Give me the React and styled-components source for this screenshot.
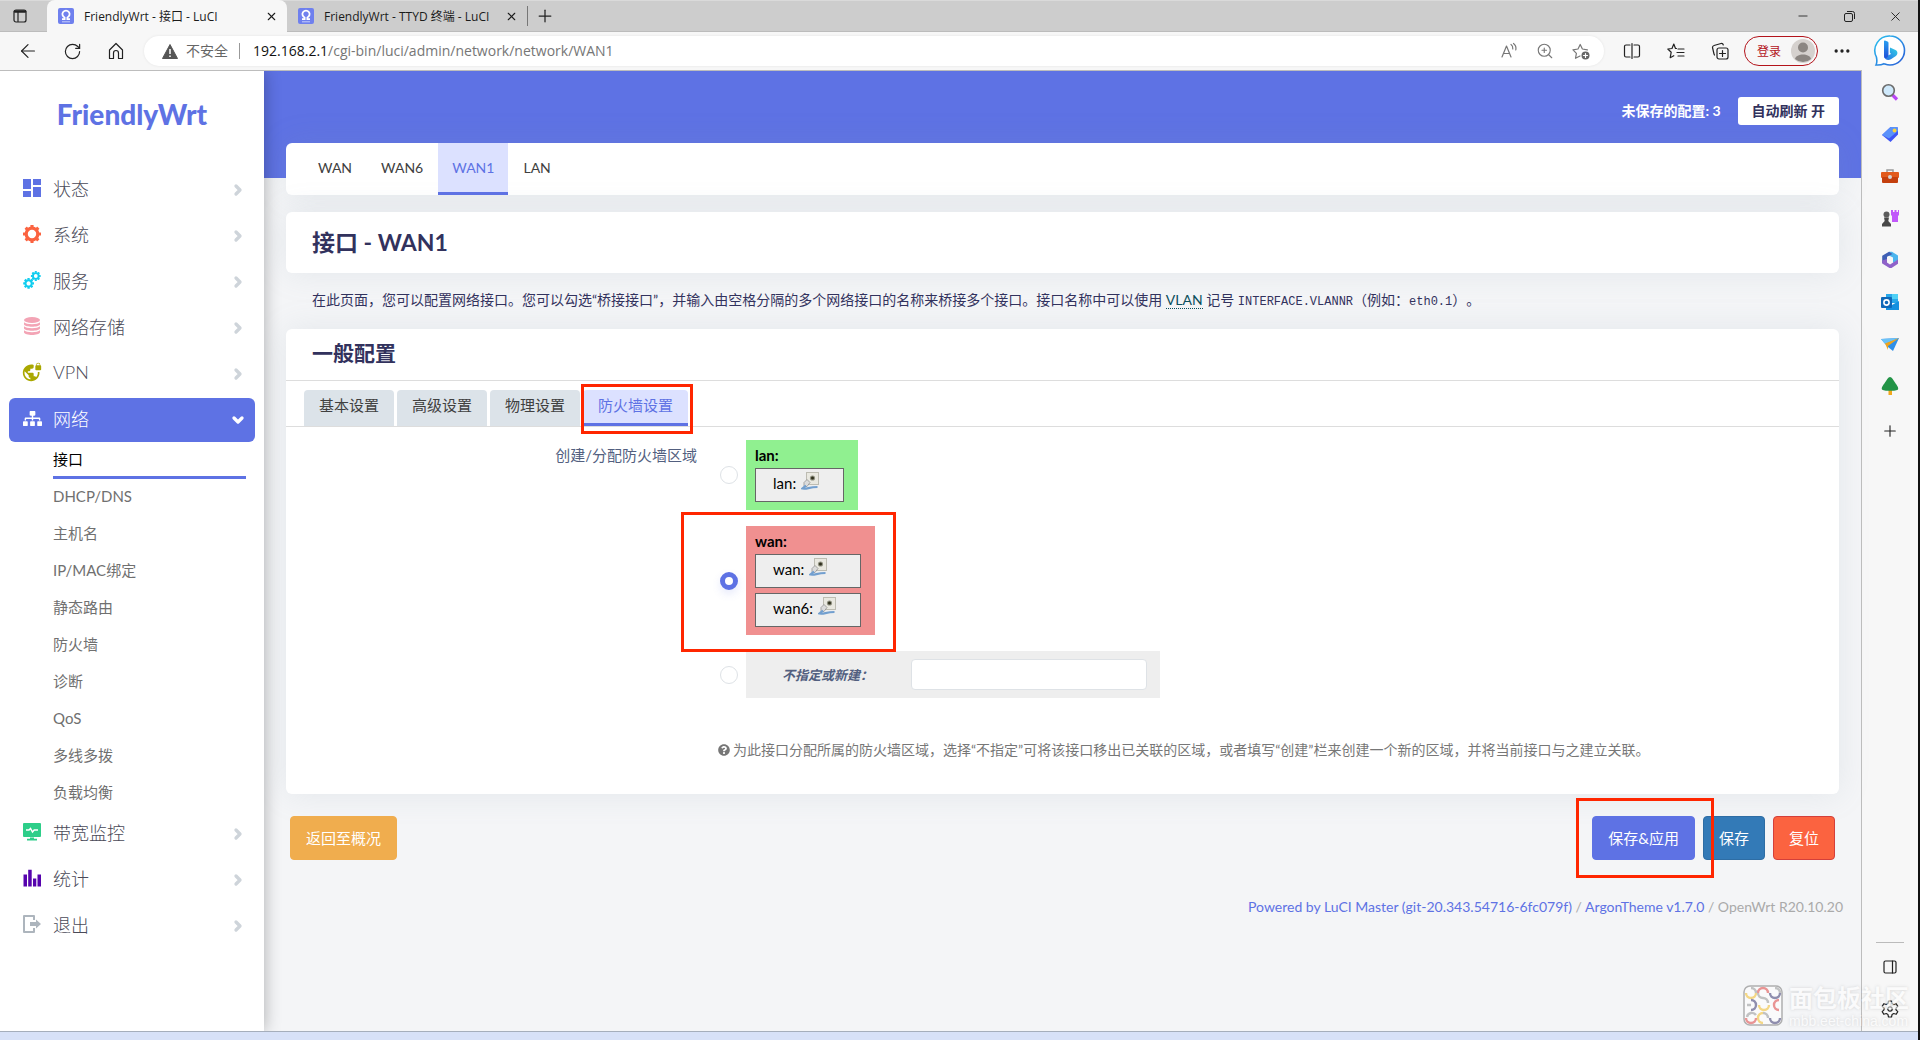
import React, { useState } from "react";
import styled, { createGlobalStyle, css } from "styled-components";
import { MdDashboard, MdVpnLock } from "react-icons/md";
import { FaQuestionCircle, FaSitemap } from "react-icons/fa";
import {
  ArrowLeft,
  ChevronDown,
  ChevronRight,
  Ellipsis,
  Minus,
  Plus,
  RotateCw,
  X,
  ZoomIn,
} from "lucide-react";

const GlobalStyle = createGlobalStyle`
  * {
    box-sizing: border-box;
  }
  body {
    margin: 0;
    font-family: Lato, "Noto Sans CJK SC", sans-serif;
    font-size: 15px;
    color: #32325d;
    background: #f4f5f7;
    text-spacing-trim: space-all;
  }
  button, input {
    font: inherit;
  }
  a {
    color: inherit;
    text-decoration: none;
  }
  h1, h2, p, ul {
    margin: 0;
    padding: 0;
  }
  ul {
    list-style: none;
  }
  svg {
    display: block;
    flex: none;
  }
`;

const favicon = (
  <svg width="16" height="16" viewBox="0 0 16 16">
    <rect width="16" height="16" rx="2" fill="#6f80ee" />
    <path
      d="M4 11.200h2.600V9.500A3.600 3.600 0 1 1 9.400 9.500v1.700H12"
      fill="none"
      stroke="#fff"
      strokeWidth="1.800"
    />
    <path d="M4 13.800h8" stroke="#c7cefa" strokeWidth="1" />
  </svg>
);

const Gear = ({ cx, cy, r, hole, tooth }) => (
  <g transform={`translate(${cx} ${cy})`}>
    <circle
      r={(r + hole) / 2}
      fill="none"
      stroke="currentColor"
      strokeWidth={r - hole}
    />
    {[0, 45, 90, 135, 180, 225, 270, 315].map((angle) => (
      <rect
        key={angle}
        x={-tooth}
        y={-r - tooth}
        width={tooth * 2}
        height={tooth * 1.5}
        rx="0.4"
        fill="currentColor"
        transform={`rotate(${angle})`}
      />
    ))}
  </g>
);

const systemIcon = (
  <svg width="18" height="18" viewBox="0 0 18 18">
    <Gear cx={9} cy={9} r={7.4} hole={4.2} tooth={1.6} />
  </svg>
);

const servicesIcon = (
  <svg width="18" height="18" viewBox="0 0 18 18">
    <Gear cx={5.6} cy={12.4} r={4.2} hole={2.1} tooth={1.2} />
    <Gear cx={12.8} cy={5} r={3.8} hole={1.9} tooth={1.1} />
  </svg>
);

const storageIcon = (
  <svg width="18" height="18" viewBox="0 0 18 18" fill="currentColor">
    <ellipse cx="9" cy="3" rx="8" ry="3" />
    <path d="M1 5.200c2 2.600 14 2.600 16 0v2.300c-1 3-15 3-16 0z" />
    <path d="M1 9.200c2 2.600 14 2.600 16 0v2.300c-1 3-15 3-16 0z" />
    <path d="M1 13.200c2 2.600 14 2.600 16 0v2.300c-1 3.300-15 3.300-16 0z" />
  </svg>
);

const monitorIcon = (
  <svg width="18" height="18" viewBox="0 0 18 18">
    <rect y="0" width="18" height="14" rx="1" fill="currentColor" />
    <path d="M4 16.700h10M7 15.500h4" stroke="currentColor" strokeWidth="1.800" />
    <path
      d="M3 7h3l1.500-1.500L9.500 9l1.700-2H15"
      fill="none"
      stroke="#fff"
      strokeWidth="1.500"
    />
  </svg>
);

const statsIcon = (
  <svg width="18" height="18" viewBox="0 0 18 18" fill="currentColor">
    <path d="M.5 5.500h3.500v12H.5zM5.200.8h3.500v16.700H5.200zM10 9.500h3.300v8H10zM14.500 5.500H18v12h-3.500z" />
  </svg>
);

const logoutIcon = (
  <svg width="18" height="18" viewBox="0 0 18 18">
    <path
      d="M11 5V1H1v16h10v-4"
      fill="none"
      stroke="currentColor"
      strokeWidth="2"
      strokeLinejoin="round"
    />
    <path d="M7 7h6V4.500L18 9l-5 4.500V11H7z" fill="currentColor" />
  </svg>
);

const menu = [
  { label: "状态", color: "#5e72e4", icon: <MdDashboard size={24} /> },
  { label: "系统", color: "#fb6340", icon: systemIcon },
  { label: "服务", color: "#11cdef", icon: servicesIcon },
  { label: "网络存储", color: "#f3a4b5", icon: storageIcon },
  { label: "VPN", color: "#aaa800", icon: <MdVpnLock size={20} /> },
  { label: "网络", color: "#ffffff", icon: <FaSitemap size={19} />, open: true },
  { label: "带宽监控", color: "#2dce89", icon: monitorIcon },
  { label: "统计", color: "#5603ad", icon: statsIcon },
  { label: "退出", color: "#adb5bd", icon: logoutIcon },
];

const networkPages = [
  "接口",
  "DHCP/DNS",
  "主机名",
  "IP/MAC绑定",
  "静态路由",
  "防火墙",
  "诊断",
  "QoS",
  "多线多拨",
  "负载均衡",
];

const interfaces = ["WAN", "WAN6", "WAN1", "LAN"];
const configTabs = ["基本设置", "高级设置", "物理设置", "防火墙设置"];

const zones = [
  { name: "lan", color: "#90f090", members: ["lan"] },
  { name: "wan", color: "#f09090", members: ["wan", "wan6"] },
];

const NetIcon = () => (
  <svg width="18" height="18" viewBox="0 0 18 18">
    <rect x="5.500" y=".5" width="12" height="12" fill="#e9e8e0" stroke="#bdbcb2" />
    <circle cx="11.500" cy="6" r="2.600" fill="#8f9080" />
    <circle cx="11.500" cy="6" r="1.500" fill="#2f2f1c" />
    <path d="M3 10.500l3-3 3 3-3 4H3z" fill="#dcdcdc" stroke="#888" strokeWidth=".7" />
    <path
      d="M5 13.500l-3.500 3c5 .8 6-1.500 15-1.500"
      fill="none"
      stroke="#729fcf"
      strokeWidth="2.200"
    />
  </svg>
);

const BingIcon = () => (
  <svg width="34" height="34" viewBox="0 0 34 34">
    <defs>
      <linearGradient id="bingRing" x1="0" y1="0" x2="1" y2="1">
        <stop offset="0" stopColor="#2bc4f0" />
        <stop offset="1" stopColor="#2a5bd7" />
      </linearGradient>
      <linearGradient id="bingMark" x1="0" y1="0" x2="0" y2="1">
        <stop offset="0" stopColor="#2aa0f0" />
        <stop offset="1" stopColor="#1f4fd8" />
      </linearGradient>
      <linearGradient id="bingTail" x1="0" y1="1" x2="1" y2="0">
        <stop offset="0" stopColor="#2a6be4" />
        <stop offset="1" stopColor="#31d3e6" />
      </linearGradient>
    </defs>
    <path
      d="M17 2a14.500 14.500 0 1 1 0 29c-3 0-4.500-.8-6-1.300-2 1-5 1.500-8 1.300 1.500-3 1-5 .4-8A14.500 14.500 0 0 1 17 2z"
      fill="#fff"
      stroke="url(#bingRing)"
      strokeWidth="1.600"
    />
    <path
      d="M17 13.500l5.500 2.500c2.500 1.200 2.500 4.500.4 5.900l-5 3.300c-2.600 1.600-5.900.4-6.700-2l6.800-3.200-1.200-1.500z"
      fill="url(#bingTail)"
    />
    <path d="M11 7.200c0-.6.500-.9 1-.7l2.500 1c.7.300 1 .7 1 1.400v11.600c0 1.500-.8 2.500-2 3.300-1.300.8-2.500-.1-2.500-1.500z" fill="url(#bingMark)" />
  </svg>
);

const railIcons = [
  {
    label: "搜索",
    art: (
      <>
        <path d="M11.500 12l4.500 4.500" stroke="#b847f5" strokeWidth="3.200" />
        <circle cx="7.500" cy="7.500" r="5.800" fill="#cfe9fb" stroke="#6b6b6b" strokeWidth="1.600" />
      </>
    ),
  },
  {
    label: "购物",
    art: (
      <>
        <path d="M9.500 2H16l1 1v6.500L9.500 17 1 10z" fill="#3f55f5" />
        <path d="M9.500 2H16l1 1v3L8 13.500 1 10z" fill="#5a92fa" />
        <circle cx="13.500" cy="5.500" r="1.900" fill="#fbd13c" />
      </>
    ),
  },
  {
    label: "工具",
    art: (
      <>
        <path d="M6 6V3h6v3" fill="none" stroke="#9a9a9a" strokeWidth="1.500" />
        <rect x="0" y="5" width="18" height="6" rx="1" fill="#e25a1c" />
        <rect x="1" y="10" width="16" height="6" rx="1" fill="#c43f0e" />
        <circle cx="9" cy="10" r="2" fill="#d5d5d5" />
      </>
    ),
  },
  {
    label: "游戏",
    art: (
      <>
        <path d="M10 1h2v2h1.500V1h2v2H17V1h1v5l-1 1v6h-6V7l-1-1z" fill="#c158fa" />
        <circle cx="5.500" cy="5.500" r="3" fill="#5c5c5c" />
        <path d="M3 8.500h5L7.300 12l2.700 3v2.500H1V15l2.700-3z" fill="#484848" />
      </>
    ),
  },
  {
    label: "Microsoft 365",
    art: (
      <>
        <path d="M8 .8h3l6 3.700v4.500l-5 3V6.500L7 4z" fill="#4bb5ee" />
        <path d="M8 .8L1.200 4.800v7.400L6 9.500V5.800L11.500 3z" fill="#3f5fb4" />
        <path d="M1.200 9.500v3L8.500 17h2L17 12.800V8.500l-8 5-3-2V8z" fill="#8f62c9" />
        <circle cx="9" cy="9" r="2.900" fill="#f7f7f7" />
      </>
    ),
  },
  {
    label: "Outlook",
    art: (
      <>
        <rect x="5" y="1" width="12" height="9" fill="#28a8ea" />
        <rect x="11" y="1" width="6" height="5" fill="#50d0f5" />
        <path d="M5 8l6 4 7-4v9H5z" fill="#1490df" />
        <rect x="0" y="4" width="11" height="11" rx="1" fill="#0f68b8" />
        <circle cx="5.500" cy="9.500" r="2.600" fill="none" stroke="#fff" strokeWidth="1.600" />
      </>
    ),
  },
  {
    label: "Drop",
    art: (
      <>
        <path d="M0 4l18-1-6 13-5-4z" fill="#2f8fe8" />
        <path d="M0 4l18-1L4 9z" fill="#6cc2f7" />
        <path d="M4 8.500l14-5.500L7 11v4z" fill="#f0a51e" />
      </>
    ),
  },
  {
    label: "植树",
    art: (
      <>
        <rect x="7.500" y="13" width="3.500" height="5" fill="#f2a81d" />
        <path d="M9 0c2 0 3 2.500 5 5.500 1.500 2.500 4 5 3 7-.8 1.800-15.200 1.800-16 0-1-2 1.500-4.500 3-7C6 2.500 7 0 9 0z" fill="#239447" />
      </>
    ),
  },
];

const ToolIcon = ({ children, color = "#222" }) => (
  <svg
    width="18"
    height="18"
    viewBox="0 0 18 18"
    fill="none"
    stroke={color}
    strokeWidth="1.200"
    strokeLinejoin="round"
    strokeLinecap="round"
  >
    {children}
  </svg>
);

const App = () => {
  const [zone, setZone] = useState("wan");
  const [newZone, setNewZone] = useState("");

  return (
    <Window>
      <GlobalStyle />
      <TabStrip>
        <TabActions aria-label="标签页操作">
          <ToolIcon>
            <rect x="3" y="3" width="12" height="12" rx="2" />
            <path d="M4 4.500h10" strokeWidth="2.500" />
            <path d="M7 5v9.500" />
          </ToolIcon>
        </TabActions>
        <BrowserTab $active>
          {favicon}
          <span>FriendlyWrt - 接口 - LuCI</span>
          <X size={13} strokeWidth={2} />
        </BrowserTab>
        <BrowserTab>
          {favicon}
          <span>FriendlyWrt - TTYD 终端 - LuCI</span>
          <X size={13} strokeWidth={2} />
        </BrowserTab>
        <NewTab aria-label="新建标签页">
          <Plus size={20} strokeWidth={1.500} />
        </NewTab>
        <WindowButtons>
          <button aria-label="最小化">
            <Minus size={14} strokeWidth={1.500} />
          </button>
          <button aria-label="还原">
            <svg width="11" height="11" viewBox="0 0 11 11" fill="none" stroke="#222">
              <rect x=".5" y="2.500" width="8" height="8" rx="1.500" />
              <path d="M3 .5h5.500a2 2 0 0 1 2 2V8" />
            </svg>
          </button>
          <button aria-label="关闭">
            <X size={15} strokeWidth={1.500} />
          </button>
        </WindowButtons>
      </TabStrip>

      <Body>
        <Column>
          <Toolbar>
            <IconButton aria-label="后退">
              <ArrowLeft size={22} strokeWidth={1.300} />
            </IconButton>
            <IconButton aria-label="刷新">
              <RotateCw size={19} strokeWidth={1.500} />
            </IconButton>
            <IconButton aria-label="主页">
              <ToolIcon>
                <path d="M2.500 8L9 1.500 15.500 8v8.500h-4V11a2.500 2.500 0 0 0-5 0v5.500h-4z" />
              </ToolIcon>
            </IconButton>
            <AddressBar>
              <svg width="16" height="15" viewBox="0 0 16 15">
                <path d="M8 .5L15.500 14.500H.5z" fill="#555" stroke="#555" strokeLinejoin="round" />
                <path d="M8 5v5M8 11.500v1.500" stroke="#fff" strokeWidth="1.500" />
              </svg>
              <Insecure>不安全</Insecure>
              <Url>
                <b>192.168.2.1</b>/cgi-bin/luci/admin/network/network/WAN1
              </Url>
              <AddressIcons>
                <ToolIcon color="#777">
                  <path d="M2 15L6.500 4 11 15M3.500 11.500h6M11 2.500c1.500 1 2 2.500 1.800 4.500M13.500 1.500c2 1.500 2.800 4 2.300 6.500" />
                </ToolIcon>
                <ZoomIn size={18} strokeWidth={1.500} />
                <ToolIcon color="#777">
                  <path d="M8 14l-4.500 2.300.9-5L1 7.800l5-.8 2.200-4.500L10.400 7l5 .8" />
                  <circle cx="13.500" cy="13.500" r="4" fill="#666" stroke="none" />
                  <path d="M13.500 11.500v4M11.500 13.500h4" stroke="#fff" />
                </ToolIcon>
              </AddressIcons>
            </AddressBar>
            <BrowserTools>
              <IconButton aria-label="分屏">
                <ToolIcon>
                  <path d="M7 3H3a1.500 1.500 0 0 0-1.500 1.500v9A1.500 1.500 0 0 0 3 15h4M11 3h4a1.500 1.500 0 0 1 1.500 1.500v9A1.500 1.500 0 0 1 15 15h-4M9 1.500v15" />
                </ToolIcon>
              </IconButton>
              <IconButton aria-label="收藏夹">
                <ToolIcon>
                  <path d="M9.500 6.500h-1L6.800 2 5 6.500l-4.200.5 3.400 3.200-1 5.500 3.600-2M11 7h6M10 10.500h7M11 14h6" />
                </ToolIcon>
              </IconButton>
              <IconButton aria-label="集锦">
                <ToolIcon>
                  <path d="M3 12L1.500 5.500a2 2 0 0 1 1.500-2l7-2a2 2 0 0 1 2.300 1.500M3 12l.5 1" />
                  <rect x="6" y="6" width="11" height="11" rx="2" />
                  <path d="M11.500 8.500v6M8.500 11.500h6" />
                </ToolIcon>
              </IconButton>
              <Login>
                登录
                <svg width="24" height="24" viewBox="0 0 24 24">
                  <circle cx="12" cy="12" r="12" fill="#d5d1ce" />
                  <circle cx="12" cy="8.500" r="5" fill="#8b8682" />
                  <path d="M4 20c1-6 15-6 16 0a12 12 0 0 1-16 0z" fill="#8b8682" />
                </svg>
              </Login>
              <MoreButton aria-label="更多">
                <Ellipsis size={20} strokeWidth={2} />
              </MoreButton>
            </BrowserTools>
          </Toolbar>

          <Page>
            <Sidebar>
              <Brand href="#">FriendlyWrt</Brand>
              <nav>
                {menu.map((item) => (
                  <React.Fragment key={item.label}>
                    <MenuLink href="#" $open={item.open}>
                      <MenuIcon $color={item.color}>{item.icon}</MenuIcon>
                      <span>{item.label}</span>
                      {item.open ? (
                        <ChevronDown size={16} strokeWidth={5} />
                      ) : (
                        <ChevronRight size={16} strokeWidth={5} />
                      )}
                    </MenuLink>
                    {item.open && (
                      <SubMenu>
                        {networkPages.map((page, i) => (
                          <SubItem key={page} $active={i === 0}>
                            <a href="#">{page}</a>
                          </SubItem>
                        ))}
                      </SubMenu>
                    )}
                  </React.Fragment>
                ))}
              </nav>
            </Sidebar>

            <Main>
              <Header>
                <a href="#">未保存的配置: 3</a>
                <RefreshButton>自动刷新 开</RefreshButton>
              </Header>
              <Content>
                <InterfaceTabs>
                  {interfaces.map((name) => (
                    <InterfaceTab key={name} href="#" $active={name === "WAN1"}>
                      {name}
                    </InterfaceTab>
                  ))}
                </InterfaceTabs>
                <TitleCard>
                  <h1>接口 - WAN1</h1>
                </TitleCard>
                <Description>
                  在此页面，您可以配置网络接口。您可以勾选“桥接接口”，并输入由空格分隔的多个网络接口的名称来桥接多个接口。接口名称中可以使用{" "}
                  <abbr>VLAN</abbr> 记号 <code>INTERFACE.VLANNR</code>（例如：
                  <code>eth0.1</code>）。
                </Description>

                <ConfigCard>
                  <h2>一般配置</h2>
                  <ConfigTabs>
                    {configTabs.map((tab) => (
                      <ConfigTab key={tab} $active={tab === "防火墙设置"}>
                        <a href="#">{tab}</a>
                      </ConfigTab>
                    ))}
                  </ConfigTabs>
                  <Field>
                    <FieldLabel>创建/分配防火墙区域</FieldLabel>
                    <div>
                      {zones.map(({ name, color, members }) => (
                        <ZoneRow key={name} $marked={name === "wan"}>
                          <Radio
                            id={`zone-${name}`}
                            name="zone"
                            checked={zone === name}
                            onChange={() => setZone(name)}
                          />
                          <Zone htmlFor={`zone-${name}`} $color={color}>
                            <strong>{name}:</strong>
                            {members.map((member) => (
                              <Member key={member}>
                                {member}: <NetIcon />
                              </Member>
                            ))}
                          </Zone>
                        </ZoneRow>
                      ))}
                      <ZoneRow>
                        <Radio
                          id="zone-new"
                          name="zone"
                          checked={zone === "new"}
                          onChange={() => setZone("new")}
                        />
                        <NewZone>
                          <label htmlFor="zone-new">不指定或新建：</label>
                          <input
                            aria-label="不指定或新建"
                            value={newZone}
                            onChange={(e) => setNewZone(e.target.value)}
                          />
                        </NewZone>
                      </ZoneRow>
                      <Hint>
                        <FaQuestionCircle size={12} />
                        <span>
                          为此接口分配所属的防火墙区域，选择“不指定”可将该接口移出已关联的区域，或者填写“创建”栏来创建一个新的区域，并将当前接口与之建立关联。
                        </span>
                      </Hint>
                    </div>
                  </Field>
                </ConfigCard>

                <Actions>
                  <Button $color="#f0ad4e">返回至概况</Button>
                  <ButtonGroup>
                    <Marked>
                      <Button $color="#5e72e4">保存&应用</Button>
                    </Marked>
                    <Button $color="#337ab7" $border="#2e6da4">
                      保存
                    </Button>
                    <Button $color="#fb6340" $border="#d43f3a">
                      复位
                    </Button>
                  </ButtonGroup>
                </Actions>
              </Content>
              <Footer>
                <a href="#">Powered by LuCI Master (git-20.343.54716-6fc079f)</a> /{" "}
                <a href="#">ArgonTheme v1.7.0</a> / OpenWrt R20.10.20
              </Footer>
            </Main>
          </Page>
        </Column>

        <EdgeBar>
          <BingButton aria-label="Bing">
            <BingIcon />
          </BingButton>
          <Rail>
            {railIcons.map(({ label, art }) => (
              <RailButton key={label} aria-label={label}>
                <svg width="18" height="18" viewBox="0 0 18 18">
                  {art}
                </svg>
              </RailButton>
            ))}
            <AddButton aria-label="自定义">
              <Plus size={18} strokeWidth={1.500} />
            </AddButton>
            <RailBottom>
              <RailButton aria-label="隐藏边栏">
                <ToolIcon>
                  <rect x="3" y="3" width="12" height="12" rx="1.500" />
                  <path d="M11.500 3v12" />
                </ToolIcon>
              </RailButton>
              <RailButton aria-label="设置">
                <ToolIcon>
                  <path d="M7.500 1h3l.6 2.600 1.600.9L15.200 3.700l1.600 2.700L15 8.200v1.600l1.800 1.800-1.600 2.700-2.500-.8-1.600.9-.6 2.600h-3l-.6-2.600-1.600-.9-2.500.8-1.600-2.700L3 9.800V8.200L1.200 6.400l1.600-2.700 2.500.8 1.600-.9z" />
                  <circle cx="9" cy="9" r="2.200" />
                </ToolIcon>
              </RailButton>
            </RailBottom>
          </Rail>
        </EdgeBar>
      </Body>
      <Taskbar />

      <Watermark>
        <svg width="40" height="41" viewBox="0 0 40 41" fill="none" strokeWidth="2.400">
          <rect x="1" y="1" width="38" height="39" rx="6" fill="#fff" stroke="#777" strokeWidth="1.500" />
          <path d="M3 8a5 5 0 0 0 10 0M16 20a5 5 0 0 0 10 0M20 38a5 5 0 0 1 0-10" stroke="#f4bf2a" />
          <path d="M15 8a5 5 0 0 1 10 0M36 15a5 5 0 0 0 0 10M3 33a5 5 0 0 0 10 0" stroke="#e14545" />
          <path d="M27 8a5 5 0 0 0 10 0M8 15a5 5 0 0 1 0 10M27 33a5 5 0 0 0 10 0" stroke="#3d3a73" />
          <path d="M8 3a5 5 0 0 1 5 5M32 3a5 5 0 0 1 5 5M15 8a5 5 0 0 0 5 5 5 5 0 0 1 5 5M4 20h4M4 32a5 5 0 0 1 9-2M20 28a5 5 0 0 1 5 5" stroke="#999" />
        </svg>
        <div>
          <strong>面包板社区</strong>
          <span>mbb.eet-china.com</span>
        </div>
      </Watermark>
    </Window>
  );
};

const redFrame = css`
  position: relative;
  &::after {
    content: "";
    position: absolute;
    border: 3px solid #ff2600;
    pointer-events: none;
  }
`;

const plainButton = css`
  display: flex;
  align-items: center;
  justify-content: center;
  padding: 0;
  border: 0;
  background: none;
  color: #222;
`;

const Window = styled.div`
  position: relative;
  display: flex;
  flex-direction: column;
  min-height: 100vh;
  border-right: 2px solid #111;
  background: #f7f7f7;
`;

const TabStrip = styled.div`
  display: flex;
  height: 32px;
  background: #cdcdcd;
  box-shadow: inset 0 1px #dadada, inset 0 -1px #bcbcbc;
  font-family: "Open Sans", "Noto Sans CJK SC", sans-serif;
  font-size: 12px;
  color: #1b1b1b;
`;

const TabActions = styled.button`
  ${plainButton}
  width: 47px;
  padding-right: 8px;
`;

const BrowserTab = styled.div`
  display: flex;
  align-items: center;
  gap: 10px;
  width: 240px;
  padding: 0 9px 0 11px;
  border-radius: 8px 8px 0 0;
  background: ${({ $active }) => ($active ? "#f7f7f7" : "none")};
  span {
    flex: 1;
    white-space: nowrap;
  }
`;

const NewTab = styled.button`
  ${plainButton}
  width: 34px;
  height: 20px;
  margin-top: 6px;
  border-left: 1px solid #777;
`;

const WindowButtons = styled.div`
  display: flex;
  margin-left: auto;
  button {
    ${plainButton}
    width: 46px;
  }
`;

const Body = styled.div`
  flex: 1;
  display: flex;
`;

const Column = styled.div`
  flex: 1;
  min-width: 0;
  display: flex;
  flex-direction: column;
`;

const Toolbar = styled.div`
  display: flex;
  align-items: center;
  height: 39px;
  padding-left: 6px;
  border-bottom: 1px solid #bdbdbd;
  font-family: "Open Sans", "Noto Sans CJK SC", sans-serif;
  font-size: 14px;
`;

const IconButton = styled.button`
  ${plainButton}
  width: 44px;
  height: 30px;
`;

const MoreButton = styled(IconButton)`
  width: 38px;
`;

const AddressBar = styled.div`
  flex: 1;
  display: flex;
  align-items: center;
  height: 30px;
  margin-left: 6px;
  padding: 0 14px 0 18px;
  border-radius: 15px;
  background: #fff;
  box-shadow: 0 0 3px rgba(0, 0, 0, 0.08);
`;

const Insecure = styled.span`
  margin-left: 8px;
  padding-right: 11px;
  border-right: 1px solid #999;
  line-height: 16px;
  color: #666;
`;

const Url = styled.span`
  flex: 1;
  margin-left: 13px;
  padding-bottom: 1px;
  color: #767676;
  b {
    font-weight: 400;
    color: #111;
  }
`;

const AddressIcons = styled.div`
  display: flex;
  gap: 18px;
  color: #777;
`;

const BrowserTools = styled.div`
  display: flex;
  align-items: center;
  padding-left: 6px;
`;

const Login = styled.button`
  ${plainButton}
  gap: 10px;
  width: 74px;
  height: 30px;
  margin: 0 5px 0 2px;
  padding-left: 10px;
  border: 1px solid #b3131b;
  border-radius: 15px;
  font-size: 12px;
  color: #b3131b;
`;

const Page = styled.div`
  flex: 1;
  display: flex;
`;

const Sidebar = styled.aside`
  position: relative;
  flex: none;
  width: 264px;
  background: #fff;
  box-shadow: 0 0 16px rgba(0, 0, 0, 0.3);
  clip-path: inset(0 -20px 0 0);
  nav {
    display: flex;
    flex-direction: column;
    gap: 2px;
  }
`;

const Brand = styled.a`
  display: block;
  height: 97px;
  padding-top: 23px;
  text-align: center;
  font-size: 28px;
  font-weight: 900;
  line-height: 40px;
  color: #5e72e4;
`;

const MenuLink = styled.a`
  display: flex;
  align-items: center;
  height: 44px;
  margin: 0 9px;
  padding: 0 9px 0 12px;
  border-radius: 6px;
  font-size: 18px;
  font-weight: 300;
  background: ${({ $open }) => ($open ? "#5e72e4" : "none")};
  span {
    flex: 1;
    margin-left: 10px;
    padding-bottom: 4px;
    color: ${({ $open }) => ($open ? "#fff" : "#4a4a58")};
  }
  > svg {
    color: ${({ $open }) => ($open ? "#fff" : "#ced4da")};
  }
`;

const MenuIcon = styled.div`
  display: flex;
  align-items: center;
  justify-content: center;
  width: 22px;
  padding-bottom: 4px;
  color: ${({ $color }) => $color};
`;

const SubMenu = styled.ul`
  margin: -2px 0;
`;

const SubItem = styled.li`
  height: 37px;
  margin: 0 18px 0 53px;
  border-bottom: 3px solid ${({ $active }) => ($active ? "#5e72e4" : "transparent")};
  line-height: 35px;
  color: ${({ $active }) => ($active ? "#000" : "#707070")};
  a {
    display: block;
  }
`;

const Main = styled.main`
  flex: 1;
  min-width: 0;
  background: #f4f5f7;
`;

const Header = styled.header`
  display: flex;
  justify-content: flex-end;
  align-items: flex-start;
  gap: 17px;
  height: 107px;
  padding: 26px 22px 0;
  background: #5e72e4;
  font-size: 14px;
  font-weight: 700;
  line-height: 28px;
  color: #fff;
`;

const RefreshButton = styled.button`
  ${plainButton}
  height: 28px;
  padding: 0 14px;
  border-radius: 3px;
  background: #fff;
  color: #32325d;
`;

const Content = styled.div`
  margin-top: -35px;
  padding: 0 22px;
`;

const Card = styled.section`
  border-radius: 6px;
  background: #fff;
  box-shadow: 0 0 32px rgba(136, 152, 170, 0.15);
`;

const InterfaceTabs = styled(Card)`
  display: flex;
  gap: 1px;
  height: 52px;
  margin-bottom: 17px;
  padding: 0 18px;
`;

const InterfaceTab = styled.a`
  padding: 0 14px;
  border-bottom: 3px solid ${({ $active }) => ($active ? "#5e72e4" : "transparent")};
  font-size: 14px;
  line-height: 49px;
  background: ${({ $active }) => ($active ? "#dce1ff" : "none")};
  color: ${({ $active }) => ($active ? "#5e72e4" : "#404040")};
`;

const TitleCard = styled(Card)`
  padding: 14px 26px 15px;
  h1 {
    font-size: 23px;
    line-height: 32px;
  }
`;

const Description = styled.p`
  padding: 17px 26px 19px;
  font-size: 14px;
  line-height: 20px;
  abbr {
    border-bottom: 1px dotted #0b4f5c;
    color: #0b4f5c;
  }
  code {
    font-family: "Liberation Mono", monospace;
    font-size: 12px;
    line-height: 1;
  }
`;

const ConfigCard = styled(Card)`
  padding-bottom: 34px;
  h2 {
    padding: 0 26px 3px;
    border-bottom: 1px solid #ddd;
    font-size: 21px;
    line-height: 48px;
  }
`;

const ConfigTabs = styled.ul`
  display: flex;
  gap: 3px;
  padding: 9px 18px 0;
  border-bottom: 1px solid #ddd;
`;

const ConfigTab = styled.li`
  height: 36px;
  padding: 0 15px;
  border-radius: 4px 4px 0 0;
  line-height: 31px;
  background: #dce3e9;
  color: #404040;
  ${({ $active }) =>
    $active &&
    css`
      ${redFrame}
      border-bottom: 3px solid #5e72e4;
      background: #dce1ff;
      color: #5e72e4;
      &::after {
        inset: -6px -5px -11px -2px;
      }
    `}
`;

const Field = styled.div`
  display: grid;
  grid-template-columns: 411px 1fr;
  gap: 20px;
  padding-top: 13px;
`;

const FieldLabel = styled.span`
  padding-top: 4px;
  text-align: right;
  line-height: 22px;
  color: #525f7f;
`;

const ZoneRow = styled.div`
  display: flex;
  align-items: center;
  gap: 8px;
  width: fit-content;
  margin-bottom: 16px;
  padding-left: 3px;
  ${({ $marked }) =>
    $marked &&
    css`
      ${redFrame}
      &::after {
        inset: -14px -21px -17px -36px;
      }
    `}
`;

const Radio = styled.input.attrs({ type: "radio" })`
  appearance: none;
  flex: none;
  width: 18px;
  height: 18px;
  margin: 0;
  border: 1px solid #dee2e6;
  border-radius: 50%;
  background: #fff;
  &:checked {
    border: 5px solid #5e72e4;
    box-shadow: 0 4px 8px rgba(94, 114, 228, 0.15);
  }
`;

const Zone = styled.label`
  display: flex;
  flex-direction: column;
  padding: 5px 14px 8px 9px;
  background: ${({ $color }) => $color};
  color: #000;
  strong {
    margin-bottom: 3px;
    line-height: 20px;
  }
`;

const Member = styled.span`
  display: flex;
  gap: 5px;
  height: 34px;
  padding: 3px 24px 0 17px;
  border: 1px solid #666;
  line-height: 23px;
  background: #eee;
  & + & {
    margin-top: 5px;
  }
`;

const NewZone = styled.div`
  display: flex;
  align-items: center;
  padding: 8px 13px 8px 36px;
  background: #eee;
  label {
    width: 129px;
    font-size: 13px;
    font-style: italic;
    font-weight: 700;
    color: #525f7f;
  }
  input {
    width: 236px;
    height: 31px;
    padding: 0 10px;
    border: 1px solid #dee2e6;
    border-radius: 4px;
    background: #fff;
  }
`;

const Hint = styled.p`
  display: flex;
  align-items: center;
  gap: 3px;
  padding: 26px 0 0 1px;
  font-size: 14px;
  line-height: 20px;
  color: #777;
`;

const Actions = styled.div`
  display: flex;
  justify-content: space-between;
  padding: 22px 4px 0;
`;

const ButtonGroup = styled.div`
  display: flex;
  gap: 8px;
`;

const Button = styled.button`
  height: 44px;
  padding: 0 15px 2px;
  border: 1px solid ${({ $color, $border }) => $border || $color};
  border-radius: 4px;
  background: ${({ $color }) => $color};
  color: #fff;
`;

const Marked = styled.div`
  ${redFrame}
  z-index: 1;
  &::after {
    inset: -18px -19px -18px -16px;
  }
`;

const Footer = styled.footer`
  padding: 37px 18px 20px;
  text-align: right;
  font-size: 14px;
  line-height: 20px;
  color: #aaa;
  a {
    color: #5e72e4;
  }
`;

const EdgeBar = styled.aside`
  display: flex;
  flex-direction: column;
  width: 57px;
`;

const BingButton = styled.button`
  ${plainButton}
  height: 38px;
`;

const Rail = styled.div`
  flex: 1;
  display: flex;
  flex-direction: column;
  padding-top: 1px;
  border-left: 1px solid #bdbdbd;
`;

const RailButton = styled.button`
  ${plainButton}
  height: 42px;
`;

const AddButton = styled(RailButton)`
  height: 48px;
`;

const RailBottom = styled.div`
  width: 28px;
  margin: auto auto 0;
  padding: 3px 0 1px;
  border-top: 1px solid #bbb;
  button {
    width: 28px;
  }
`;

const Taskbar = styled.div`
  height: 9px;
  border-top: 1px solid #a5aebb;
  background: #d7e1f7;
`;

const Watermark = styled.div`
  position: absolute;
  right: 9px;
  bottom: 11px;
  display: flex;
  gap: 6px;
  opacity: 0.55;
  pointer-events: none;
  color: #fff;
  text-shadow: 0 0 3px rgba(0, 0, 0, 0.25);
  strong {
    display: block;
    font-size: 24px;
    line-height: 26px;
  }
  span {
    font-family: "Liberation Sans", sans-serif;
    font-size: 14px;
    line-height: 15px;
  }
`;

export default App;
